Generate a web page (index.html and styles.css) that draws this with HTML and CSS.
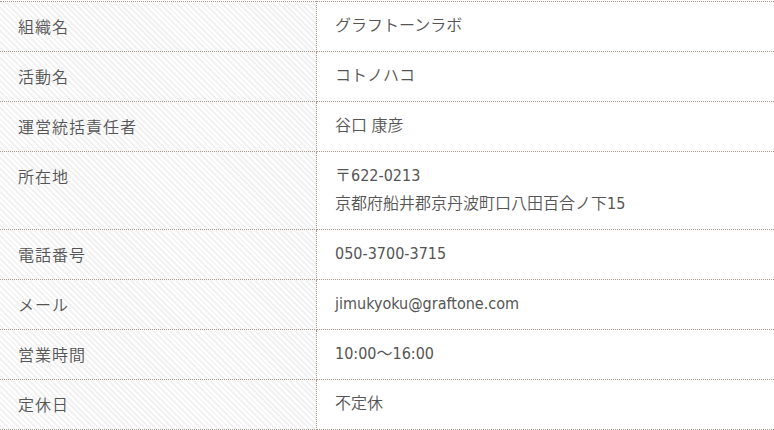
FILE: index.html
```html
<!DOCTYPE html>
<html lang="ja">
<head>
<meta charset="utf-8">
<link rel="stylesheet" href="styles.css">
</head>
<body>
<table class="info">
  <tr><th>組織名</th><td>グラフトーンラボ</td></tr>
  <tr><th>活動名</th><td>コトノハコ</td></tr>
  <tr><th>運営統括責任者</th><td>谷口 康彦</td></tr>
  <tr><th>所在地</th><td>〒622-0213<br>京都府船井郡京丹波町口八田百合ノ下15</td></tr>
  <tr><th>電話番号</th><td>050-3700-3715</td></tr>
  <tr><th>メール</th><td>jimukyoku@graftone.com</td></tr>
  <tr><th>営業時間</th><td>10:00～16:00</td></tr>
  <tr><th>定休日</th><td>不定休</td></tr>
</table>
</body>
</html>
```

FILE: styles.css
```css
html, body {
  margin: 0;
  padding: 0;
  background: #fff;
}
body {
  padding-top: 1px;
  font-family: "DejaVu Sans Condensed", "Noto Sans CJK JP", sans-serif;
  color: #555;
}
.info {
  width: 774px;
  border-collapse: collapse;
  border-top: 1px dotted #a89a8c;
}
.info th, .info td {
  border-bottom: 1px dotted #a89a8c;
  padding: 10px 18px 11px;
  line-height: 28px;
  vertical-align: top;
  text-align: left;
}
.info th {
  width: 280px;
  font-weight: 350;
  font-size: 16px;
  letter-spacing: 1px;
  font-family: "Noto Sans CJK JP", sans-serif;
  border-right: 1px dotted #a89a8c;
  background: repeating-linear-gradient(45deg, #ffffff 0, #ffffff 2px, #f1f1f1 2px, #f1f1f1 4px);
}
.info td {
  font-size: 16px;
  font-weight: 350;
}
```
